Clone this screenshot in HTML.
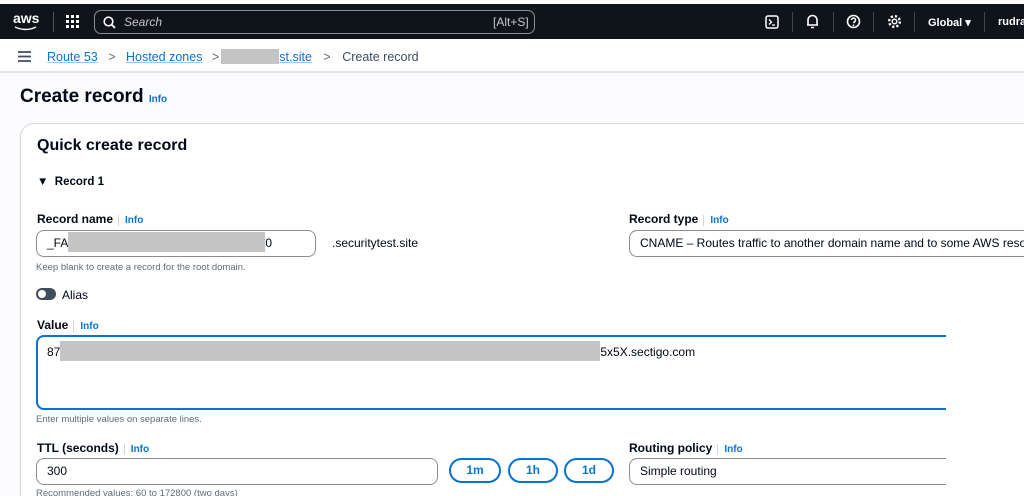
<!DOCTYPE html>
<html style="width:1024px;height:496px;overflow:hidden"><head><meta charset="utf-8"><style>
*{box-sizing:border-box;margin:0;padding:0}
body{width:1024px;height:496px;overflow:hidden;background:#fbfafd;font-family:"Liberation Sans",sans-serif;color:#000716;position:relative}
#w{position:absolute;left:0;top:0;width:1024px;height:496px;overflow:hidden}
.a{position:absolute}
.nav{left:0;top:4px;width:1024px;height:35px;background:#0f141a}
.crumb{left:0;top:39px;width:1024px;height:34px;background:#fff;border-bottom:2px solid #e4e4e8}
.link{color:#0972d3;text-decoration:underline;text-decoration-color:#9ec5ef}
.blur{background:#c4c4c4}
.card{left:20px;top:123px;width:1020px;height:373px;background:#fff;border:1px solid #d5d7db;border-bottom:none;border-radius:14px 14px 0 0}
.lbl{font-size:12px;font-weight:bold}
.info{font-size:10px;font-weight:bold;color:#0972d3;border-left:1px solid #d5d7db;padding-left:6px;margin-left:5px}
.inp{border:1px solid #8c8c94;border-radius:8px;background:#fff;font-size:12px;padding-left:10px;line-height:24px}
.hint{font-size:9.5px;color:#5f6b7a}
.btn{border:2px solid #0972d3;border-radius:14px;color:#0972d3;font-weight:bold;font-size:12px;text-align:center;line-height:21px}
.sep{width:1px;height:20px;background:#444;top:12px}
</style></head><body><div id="w">
<div class="a nav">
 <div class="a" style="left:13px;top:6px;color:#fff;font-size:14px;font-weight:bold">aws</div>
 <svg class="a" style="left:14px;top:22px" width="24" height="6"><path d="M1 1 Q12 6 22 1" stroke="#fff" stroke-width="1.5" fill="none"/></svg>
 <div class="a" style="left:53px;top:8px;width:1px;height:20px;background:#555"></div>
 <svg class="a" style="left:66px;top:11px" width="13" height="13" fill="#fff"><rect x="0" y="0" width="3" height="3"/><rect x="5" y="0" width="3" height="3"/><rect x="10" y="0" width="3" height="3"/><rect x="0" y="5" width="3" height="3"/><rect x="5" y="5" width="3" height="3"/><rect x="10" y="5" width="3" height="3"/><rect x="0" y="10" width="3" height="3"/><rect x="5" y="10" width="3" height="3"/><rect x="10" y="10" width="3" height="3"/></svg>
 <div class="a" style="left:94px;top:6px;width:441px;height:24px;border:1px solid #8c8c94;border-radius:7px"></div>
 <svg class="a" style="left:103px;top:12px" width="13" height="13"><circle cx="5.5" cy="5.5" r="4.3" stroke="#fff" stroke-width="1.6" fill="none"/><path d="M8.5 8.5 L12 12" stroke="#fff" stroke-width="1.8"/></svg>
 <div class="a" style="left:124px;top:11px;color:#c6c6cd;font-size:12px;font-style:italic">Search</div>
 <div class="a" style="left:493px;top:11px;color:#c6c6cd;font-size:12px">[Alt+S]</div>
 <svg class="a" style="left:765px;top:11px" width="14" height="14"><rect x="1" y="1" width="12" height="12" rx="2" stroke="#fff" stroke-width="1.5" fill="none"/><path d="M4 4.5 L6.5 7 L4 9.5 M7 10 H10" stroke="#fff" stroke-width="1.3" fill="none"/></svg>
 <div class="a sep" style="left:792px;top:8px"></div>
 <svg class="a" style="left:806px;top:10px" width="13" height="15"><path d="M2 11 V6 a4.5 4.5 0 0 1 9 0 V11 Z M1 11 H12 M5 13.5 H8" stroke="#fff" stroke-width="1.6" fill="none"/></svg>
 <div class="a sep" style="left:833px;top:8px"></div>
 <svg class="a" style="left:846px;top:10px" width="15" height="15"><circle cx="7.5" cy="7.5" r="6" stroke="#fff" stroke-width="1.6" fill="none"/><path d="M5.5 6 a2 2 0 1 1 2.5 2 v1.3" stroke="#fff" stroke-width="1.5" fill="none"/><circle cx="7.5" cy="11.3" r=".9" fill="#fff"/></svg>
 <div class="a sep" style="left:873px;top:8px"></div>
 <svg class="a" style="left:887px;top:10px" width="15" height="15"><circle cx="7.5" cy="7.5" r="2.3" stroke="#fff" stroke-width="1.5" fill="none"/><circle cx="7.5" cy="7.5" r="5.3" stroke="#fff" stroke-width="2.4" fill="none" stroke-dasharray="2.2 2"/></svg>
 <div class="a sep" style="left:914px;top:8px"></div>
 <div class="a" style="left:928px;top:12px;color:#fff;font-size:11px;font-weight:bold">Global ▾</div>
 <div class="a sep" style="left:984px;top:8px"></div>
 <div class="a" style="left:998px;top:12px;color:#fff;font-size:11px;font-weight:bold">rudra.</div>
</div>
<div class="a crumb">
 <svg class="a" style="left:18px;top:12px" width="13" height="11"><path d="M0 1H13M0 5.5H13M0 10H13" stroke="#414d5c" stroke-width="1.8"/></svg>
 <div class="a" style="left:47px;top:10px;font-size:12.5px;white-space:nowrap"><span class="link">Route 53</span> <span style="color:#5f6b7a;margin:0 7px">&gt;</span> <span class="link">Hosted zones</span> <span style="color:#5f6b7a;margin:0 2px 0 6px">&gt;</span><span class="blur" style="display:inline-block;width:58px;height:15px;vertical-align:-3px"></span><span class="link">st.site</span> <span style="color:#5f6b7a;margin:0 8px">&gt;</span> <span style="color:#414d5c">Create record</span></div>
</div>
<div class="a" style="left:20px;top:86px;font-size:19px;font-weight:bold">Create record <span style="font-size:10px;color:#0972d3">Info</span></div>
<div class="a card"></div>
<div class="a" style="left:37px;top:137px;font-size:16px;font-weight:bold">Quick create record</div>
<div class="a" style="left:37px;top:176px;font-size:11.5px;font-weight:bold">▼&nbsp; Record 1</div>
<div class="a lbl" style="left:37px;top:212px">Record name<span class="info">Info</span></div>
<div class="a inp" style="left:36px;top:230px;width:280px;height:27px">_FA<span class="blur" style="display:inline-block;width:197px;height:20px;vertical-align:-5px"></span>0</div>
<div class="a" style="left:332px;top:236px;font-size:12px">.securitytest.site</div>
<div class="a hint" style="left:36px;top:262px">Keep blank to create a record for the root domain.</div>
<div class="a" style="left:36px;top:288px;width:20px;height:12px;background:#414d5c;border-radius:6px"><div class="a" style="left:2px;top:2px;width:8px;height:8px;border-radius:50%;background:#fff"></div></div>
<div class="a" style="left:62px;top:288px;font-size:12px">Alias</div>
<div class="a lbl" style="left:37px;top:318px">Value<span class="info">Info</span></div>
<div class="a" style="left:36px;top:335px;width:920px;height:75px;border:2px solid #0972d3;border-radius:8px;background:#fff"></div>
<div class="a" style="left:47px;top:341px;font-size:12px">87<span class="blur" style="display:inline-block;width:540px;height:20px;vertical-align:-5px"></span>5x5X.sectigo.com</div>
<div class="a" style="left:946px;top:330px;width:80px;height:90px;background:#fff"></div>
<div class="a hint" style="left:36px;top:414px">Enter multiple values on separate lines.</div>
<div class="a lbl" style="left:37px;top:441px">TTL (seconds)<span class="info">Info</span></div>
<div class="a inp" style="left:36px;top:458px;width:402px;height:27px">300</div>
<div class="a btn" style="left:449px;top:458px;width:52px;height:25px">1m</div>
<div class="a btn" style="left:508px;top:458px;width:50px;height:25px">1h</div>
<div class="a btn" style="left:564px;top:458px;width:50px;height:25px">1d</div>
<div class="a hint" style="left:36px;top:488px">Recommended values: 60 to 172800 (two days)</div>
<div class="a lbl" style="left:629px;top:212px">Record type<span class="info">Info</span></div>
<div class="a inp" style="left:629px;top:230px;width:420px;height:27px;white-space:nowrap;overflow:hidden">CNAME – Routes traffic to another domain name and to some AWS resources</div>
<div class="a lbl" style="left:629px;top:441px">Routing policy<span class="info">Info</span></div>
<div class="a inp" style="left:629px;top:458px;width:420px;height:27px">Simple routing</div>
<div class="a" style="left:946px;top:440px;width:80px;height:56px;background:#fff"></div>
</div></body></html>
